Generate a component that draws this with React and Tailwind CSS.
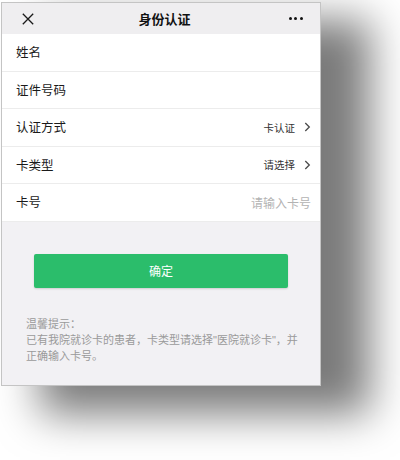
import React from "react";

const font = { fontFamily: '"Noto Sans CJK SC", "Noto Sans", sans-serif' };
const tipFont = { fontFamily: '"Liberation Sans", "Noto Sans CJK SC", sans-serif' };

function Chevron() {
  return (
    <svg width="7" height="10" viewBox="0 0 7 10" className="ml-[9px]">
      <path d="M1.3 1 L5.3 5 L1.3 9" fill="none" stroke="#4a4a4a" strokeWidth="1.3" />
    </svg>
  );
}

function Row({ label, value, placeholder, arrow }) {
  return (
    <div className="h-[37.6px] flex items-center justify-between pl-[14px] pr-[9px] border-b border-[#ececec] bg-white">
      <span className="text-[12.5px] text-[#1a1a1a]">{label}</span>
      {value && (
        <span className="flex items-center text-[10.5px] text-[#333]">
          {value}
          {arrow && <Chevron />}
        </span>
      )}
      {placeholder && <span className="text-[12px] text-[#b3b3b3]">{placeholder}</span>}
    </div>
  );
}

export default function App() {
  return (
    <div className="w-[400px] h-[460px] bg-white pt-[2px] pl-[1px] overflow-hidden" style={font}>
      <div className="w-[320px] h-[384px] border border-[#c4c4c4] bg-[#f2f1f4] flex flex-col shadow-[44px_23px_40px_5px_rgba(0,0,0,0.52)]">
        {/* header */}
        <div className="h-[31px] bg-[#efeef0] flex items-center justify-between pl-[20px] pr-[17px]">
          <svg width="12" height="12" viewBox="0 0 12 12">
            <path d="M0.8 0.8 L11.2 11.2 M11.2 0.8 L0.8 11.2" stroke="#1a1a1a" strokeWidth="1.3" />
          </svg>
          <span className="text-[13px] font-bold text-[#111] ml-[6px]">身份认证</span>
          <span className="flex gap-[2.5px]">
            <span className="w-[3px] h-[3px] rounded-full bg-[#111]" />
            <span className="w-[3px] h-[3px] rounded-full bg-[#111]" />
            <span className="w-[3px] h-[3px] rounded-full bg-[#111]" />
          </span>
        </div>

        <Row label="姓名" />
        <Row label="证件号码" />
        <Row label="认证方式" value="卡认证" arrow />
        <Row label="卡类型" value="请选择" arrow />
        <Row label="卡号" placeholder="请输入卡号" />

        <div className="px-[32px] pt-[32px]">
          <button className="w-full h-[34px] bg-[#2bbd6b] rounded-[2px] text-white text-[12px] shadow-[0_1px_2px_rgba(0,0,0,0.15)]">
            确定
          </button>
        </div>

        <div className="pl-[24px] pr-[16px] pt-[28px] text-[11px] leading-[16px] text-[#9a9a9a]" style={tipFont}>
          <p>温馨提示：</p>
          <p>已有我院就诊卡的患者，卡类型请选择"医院就诊卡"，并正确输入卡号。</p>
        </div>
      </div>
    </div>
  );
}
